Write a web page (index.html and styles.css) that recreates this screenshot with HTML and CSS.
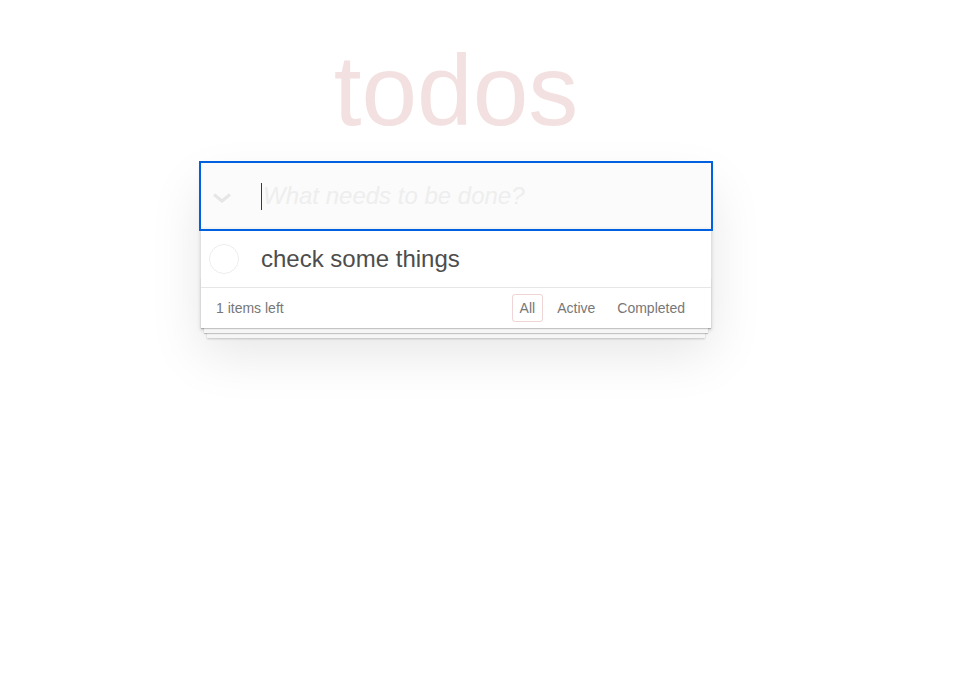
FILE: index.html
```html
<!DOCTYPE html>
<html lang="en">
<head>
<meta charset="utf-8">
<title>todos</title>
<link rel="stylesheet" href="styles.css">
</head>
<body>
<div class="page">
  <h1 class="title">todos</h1>
  <section class="todoapp">
    <header class="header">
      <div class="new-todo">
        <span class="toggle-all">
          <svg width="20" height="10" viewBox="0 0 20 10"><polyline points="2,1.5 10,8 18,1.5" fill="none" stroke="#e6e6e6" stroke-width="3" stroke-linejoin="miter"/></svg>
        </span>
        <span class="caret"></span><span class="placeholder">What needs to be done?</span>
      </div>
    </header>
    <section class="main">
      <ul class="todo-list">
        <li class="todo">
          <span class="toggle">
            <svg width="30" height="30" viewBox="0 0 30 30"><circle cx="15" cy="15" r="14.5" fill="none" stroke="#ededed" stroke-width="1"/></svg>
          </span>
          <label class="todo-label">check some things</label>
        </li>
      </ul>
    </section>
    <footer class="footer">
      <span class="todo-count">1 items left</span>
      <ul class="filters">
        <li><a class="filter selected">All</a></li>
        <li><a class="filter">Active</a></li>
        <li><a class="filter">Completed</a></li>
      </ul>
    </footer>
  </section>
</div>
</body>
</html>
```

FILE: styles.css
```css
html, body {
  margin: 0;
  padding: 0;
}

html {
  min-height: 100%;
  background: #ffffff;
}

body {
  min-height: 679px;
  font-family: "Liberation Sans", Arial, Helvetica, sans-serif;
  font-size: 14px;
  line-height: 1.4em;
  background: #ffffff;
  color: #111111;
}

.page {
  width: 510px;
  margin-left: 201px;
  padding-top: 40px;
  padding-bottom: 200px;
}

.title {
  margin: 0 0 23px 0;
  height: 100px;
  font-size: 100px;
  line-height: 100px;
  font-weight: normal;
  text-align: center;
  color: rgba(175, 47, 47, 0.15);
}

.todoapp {
  position: relative;
  background: #ffffff;
  box-shadow: 0 2px 4px 0 rgba(0, 0, 0, 0.2), 0 25px 50px 0 rgba(0, 0, 0, 0.1);
}

.header {
  position: relative;
  z-index: 3;
}

.new-todo {
  display: flex;
  align-items: center;
  height: 66px;
  box-sizing: border-box;
  padding: 0 16px 0 11px;
  background: #fbfbfb;
  box-shadow: inset 0 -2px 1px rgba(0, 0, 0, 0.03);
  outline: 2px solid #0060df;
  font-size: 24px;
  line-height: 33.6px;
}

.toggle-all {
  display: flex;
  width: 20px;
  height: 10px;
  margin: 4px 29px 0 0;
}

.caret {
  display: inline-block;
  width: 1px;
  height: 27px;
  background: #3a3a3a;
  margin-right: 1px;
}

.placeholder {
  font-style: italic;
  color: #eeeeee;
}

.main {
  position: relative;
  z-index: 2;
}

.todo-list {
  margin: 0;
  padding: 0;
  list-style: none;
}

.todo {
  display: flex;
  align-items: center;
  height: 58px;
  box-sizing: border-box;
  padding-top: 2px;
}

.toggle {
  display: flex;
  width: 30px;
  height: 30px;
  margin: 0 22px 0 8px;
}

.todo-label {
  font-size: 24px;
  line-height: 28.8px;
  color: #4d4d4d;
}

.footer {
  position: relative;
  display: flex;
  align-items: center;
  height: 20px;
  padding: 10px 15px;
  border-top: 1px solid #e6e6e6;
  color: #777777;
  line-height: 20px;
}

.footer::before {
  content: '';
  position: absolute;
  right: 0;
  bottom: 0;
  left: 0;
  height: 50px;
  overflow: hidden;
  box-shadow: 0 1px 1px rgba(0, 0, 0, 0.2),
              0 8px 0 -3px #f6f6f6,
              0 9px 1px -3px rgba(0, 0, 0, 0.2),
              0 16px 0 -6px #f6f6f6,
              0 17px 2px -6px rgba(0, 0, 0, 0.2);
}

.todo-count {
  position: relative;
  z-index: 1;
}

.filters {
  position: relative;
  z-index: 1;
  display: flex;
  margin: 0 0 0 auto;
  padding: 0;
  list-style: none;
}

.filters li {
  display: block;
}

.filter {
  display: inline-block;
  margin: 3px;
  padding: 3px 7px;
  border: 1px solid transparent;
  border-radius: 3px;
  line-height: 20px;
  color: inherit;
  text-decoration: none;
}

.filter.selected {
  border-color: rgba(175, 47, 47, 0.2);
}
```
